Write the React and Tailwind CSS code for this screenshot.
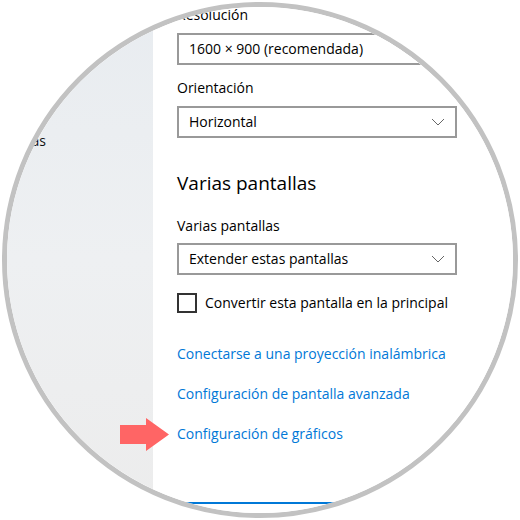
const font = { fontFamily: '"Open Sans", "Noto Sans", sans-serif' };

function Chevron() {
  return (
    <svg className="h-[8px] w-[14px]" viewBox="0 0 14 8" fill="none" aria-hidden="true">
      <path d="M1 1l6 6 6-6" stroke="#666" strokeWidth="1" />
    </svg>
  );
}

function Select({ value }) {
  return (
    <div className="flex h-[32px] w-[280px] items-center justify-between border-2 border-[#999] bg-white pl-[10px] pr-[10px] text-[14px] text-[#000]">
      <span className="whitespace-nowrap">{value}</span>
      <Chevron />
    </div>
  );
}

function Arrow() {
  return (
    <svg className="absolute left-[120px] top-[418px] h-[33px] w-[49px]" viewBox="0 0 49 33" aria-hidden="true">
      <path d="M0 7h26V0l23 16.5L26 33v-7H0z" fill="#ff6565" />
    </svg>
  );
}

export default function App() {
  return (
    <div className="h-[520px] w-[520px] bg-white p-[2px]" style={font}>
      <div className="h-[516px] w-[516px] overflow-hidden rounded-full border-[5px] border-[#c2c2c2]">
        <div className="relative -ml-[7px] -mt-[7px] flex h-[520px] w-[520px]">
          <aside className="w-[153px] bg-gradient-to-b from-[#e8ecf0] via-[#eef0f2] to-[#ececec]">
            <div className="mt-[131px] flex w-[46px] justify-end whitespace-nowrap text-[14px] leading-[20px] text-[#111]">
              Tareas
            </div>
          </aside>
          <main className="flex flex-1 flex-col bg-white pl-[24px] text-[14px] leading-[20px] text-[#000]">
            <div className="mt-[5px]">Resolución</div>
            <div className="mt-[8px]">
              <Select value="1600 × 900 (recomendada)" />
            </div>
            <div className="mt-[13px]">Orientación</div>
            <div className="mt-[8px]">
              <Select value="Horizontal" />
            </div>
            <h2 className="mt-[31px] text-[19px] leading-[28px]">Varias pantallas</h2>
            <div className="mt-[19px]">Varias pantallas</div>
            <div className="mt-[7px]">
              <Select value="Extender estas pantallas" />
            </div>
            <label className="mt-[18px] flex items-center gap-[8px]">
              <span className="h-[20px] w-[20px] border-2 border-[#333]" />
              <span>Convertir esta pantalla en la principal</span>
            </label>
            <div className="mt-[31px] flex flex-col gap-[20px] text-[#0078d7]">
              <span>Conectarse a una proyección inalámbrica</span>
              <span>Configuración de pantalla avanzada</span>
              <span>Configuración de gráficos</span>
            </div>
            <div className="mt-[58px] h-[2px] w-[280px] bg-[#0078d7]" />
          </main>
          <Arrow />
        </div>
      </div>
    </div>
  );
}
